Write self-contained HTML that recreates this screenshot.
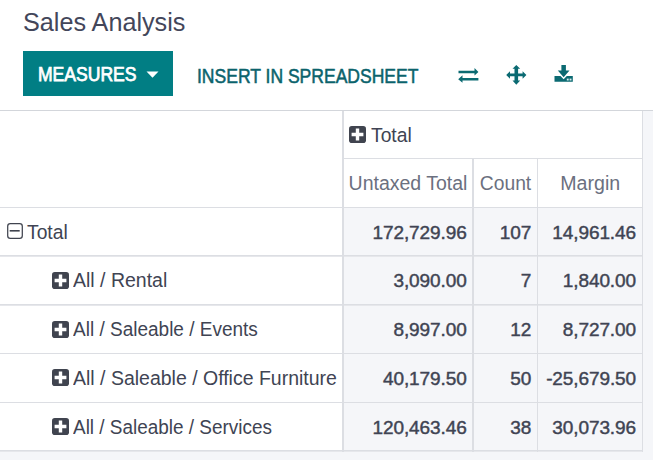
<!DOCTYPE html>
<html><head><meta charset="utf-8"><style>
html,body{margin:0;padding:0;width:653px;height:460px;overflow:hidden;background:#fff;font-family:"Liberation Sans",sans-serif;}
</style></head><body>
<div style="position:absolute;left:0px;top:111px;width:653px;height:349px;background:#f5f6f9"></div>
<div style="position:absolute;left:0px;top:111px;width:643px;height:340px;background:#f5f6f9"></div>
<div style="position:absolute;left:0px;top:111px;width:342px;height:340px;background:#ffffff"></div>
<div style="position:absolute;left:342px;top:111px;width:300px;height:96px;background:#ffffff"></div>
<div style="position:absolute;left:0px;top:110px;width:653px;height:1px;background:#d3d6db"></div>
<div style="position:absolute;left:0px;top:207px;width:643px;height:1px;background:#dcdee3"></div>
<div style="position:absolute;left:0px;top:255px;width:643px;height:1px;background:#dcdee3"></div>
<div style="position:absolute;left:0px;top:256px;width:643px;height:1px;background:#e6e7eb"></div>
<div style="position:absolute;left:0px;top:304px;width:643px;height:1px;background:#dcdee3"></div>
<div style="position:absolute;left:0px;top:305px;width:643px;height:1px;background:#e6e7eb"></div>
<div style="position:absolute;left:0px;top:353px;width:643px;height:1px;background:#dcdee3"></div>
<div style="position:absolute;left:0px;top:402px;width:643px;height:1px;background:#dcdee3"></div>
<div style="position:absolute;left:0px;top:450px;width:643px;height:1px;background:#dcdee3"></div>
<div style="position:absolute;left:0px;top:451px;width:643px;height:1px;background:#e6e7eb"></div>
<div style="position:absolute;left:342px;top:158px;width:301px;height:1px;background:#dcdee3"></div>
<div style="position:absolute;left:342px;top:111px;width:2px;height:341px;background:#dcdee3"></div>
<div style="position:absolute;left:472px;top:158px;width:2px;height:294px;background:#dcdee3"></div>
<div style="position:absolute;left:537px;top:158px;width:1px;height:294px;background:#dcdee3"></div>
<div style="position:absolute;left:642px;top:111px;width:1px;height:341px;background:#dcdee3"></div>
<div style="position:absolute;top:7.17px;font-size:25.2px;line-height:30px;color:#43465a;font-weight:normal;white-space:nowrap;left:23px;">Sales Analysis</div>
<div style="position:absolute;left:23px;top:51px;width:150px;height:45px;background:#017e84"></div>
<div style="position:absolute;top:62.64px;font-size:19.5px;line-height:23px;color:#ffffff;font-weight:normal;white-space:nowrap;-webkit-text-stroke:0.75px #fff;left:38px;"><span style="display:inline-block;transform:scaleX(0.9);transform-origin:left">MEASURES</span></div>
<svg style="position:absolute;left:146px;top:71px" width="13" height="7" viewBox="0 0 13 7"><path d="M0.5 0.5 L12.5 0.5 L6.5 6.8 Z" fill="#fff"/></svg>
<div style="position:absolute;top:64.64px;font-size:19.5px;line-height:23px;color:#0b636c;font-weight:normal;white-space:nowrap;-webkit-text-stroke:0.5px #0b636c;left:196.8px;"><span style="display:inline-block;transform:scaleX(0.899);transform-origin:left">INSERT IN SPREADSHEET</span></div>
<svg style="position:absolute;left:456px;top:66px" width="24" height="19" viewBox="0 0 24 19">
<path d="M2.5 4.8 H18.5 V2.1 L22.4 6 L18.5 9.6 V7.2 H2.5 Z" fill="#0b6a72"/>
<path d="M22.4 11.9 H6.5 V9.3 L2.2 13.2 L6.5 16.8 V14.5 H22.4 Z" fill="#0b6a72"/>
</svg>
<svg style="position:absolute;left:505px;top:64px" width="23" height="22" viewBox="0 0 23 22">
<path d="M11.3 0.9 L15.2 4.8 H13.1 V9.4 H17.6 V7.2 L21.4 10.9 L17.6 14.7 V12.2 H13.1 V16.6 H15.2 L11.3 20.8 L7.5 16.6 H9.5 V12.2 H5 V14.7 L1.2 10.9 L5 7.2 V9.4 H9.5 V4.8 H7.5 Z" fill="#0b6a72"/>
</svg>
<svg style="position:absolute;left:553px;top:63px" width="22" height="21" viewBox="0 0 22 21">
<path d="M8.4 1.9 H12.9 V7.5 H16.5 L10.65 14.3 L4.8 7.5 H8.4 Z" fill="#0b6a72"/>
<path d="M1.5 13 H7.5 L10.65 16.2 L13.8 13 H19.8 V18.8 H1.5 Z" fill="#0b6a72"/>
<rect x="13.8" y="15.6" width="1.9" height="1.9" fill="#d8ecec"/>
<rect x="16.6" y="15.6" width="1.9" height="1.9" fill="#d8ecec"/>
</svg>
<svg style="position:absolute;left:349.1px;top:125.9px" width="17" height="17" viewBox="0 0 17 17"><rect x="0" y="0" width="17" height="17" rx="2.8" fill="#40444f"/><path d="M6.8 2.6 H10.2 V6.8 H14.4 V10.2 H10.2 V14.4 H6.8 V10.2 H2.6 V6.8 H6.8 Z" fill="#fff"/></svg>
<div style="position:absolute;top:124.11px;font-size:19.3px;line-height:23px;color:#404453;font-weight:normal;white-space:nowrap;left:371px;">Total</div>
<div style="position:absolute;top:171.64px;font-size:19.5px;line-height:23px;color:#6b7080;font-weight:normal;white-space:nowrap;left:308px;width:200px;text-align:center;">Untaxed Total</div>
<div style="position:absolute;top:171.71px;font-size:19.3px;line-height:23px;color:#6b7080;font-weight:normal;white-space:nowrap;left:405.5px;width:200px;text-align:center;">Count</div>
<div style="position:absolute;top:171.11px;font-size:19.6px;line-height:24px;color:#6b7080;font-weight:normal;white-space:nowrap;left:490.20000000000005px;width:200px;text-align:center;">Margin</div>
<svg style="position:absolute;left:6.6px;top:223.2px" width="16" height="16" viewBox="0 0 16 16"><rect x="0.7" y="0.7" width="14.6" height="14.6" rx="2.6" fill="none" stroke="#40444f" stroke-width="1.25"/><rect x="2.7" y="7" width="10" height="1.6" fill="#40444f"/></svg>
<div style="position:absolute;top:220.51px;font-size:19.3px;line-height:23px;color:#404453;font-weight:normal;white-space:nowrap;left:27px;">Total</div>
<div style="position:absolute;top:220.62px;font-size:19px;line-height:23px;color:#404453;font-weight:normal;white-space:nowrap;letter-spacing:-0.1px;-webkit-text-stroke:0.45px #404453;right:186.39999999999998px;">172,729.96</div>
<div style="position:absolute;top:220.62px;font-size:19px;line-height:23px;color:#404453;font-weight:normal;white-space:nowrap;letter-spacing:-0.1px;-webkit-text-stroke:0.45px #404453;right:121.79999999999995px;">107</div>
<div style="position:absolute;top:220.62px;font-size:19px;line-height:23px;color:#404453;font-weight:normal;white-space:nowrap;letter-spacing:-0.1px;-webkit-text-stroke:0.45px #404453;right:17px;">14,961.46</div>
<svg style="position:absolute;left:51.8px;top:271.86999999999995px" width="17" height="17" viewBox="0 0 17 17"><rect x="0" y="0" width="17" height="17" rx="2.8" fill="#40444f"/><path d="M6.8 2.6 H10.2 V6.8 H14.4 V10.2 H10.2 V14.4 H6.8 V10.2 H2.6 V6.8 H6.8 Z" fill="#fff"/></svg>
<div style="position:absolute;top:269.25px;font-size:19.4px;line-height:23px;color:#404453;font-weight:normal;white-space:nowrap;left:72.5px;"><span style="display:inline-block;transform:scaleX(1.005);transform-origin:left">All / Rental</span></div>
<div style="position:absolute;top:269.39px;font-size:19px;line-height:23px;color:#404453;font-weight:normal;white-space:nowrap;letter-spacing:-0.1px;-webkit-text-stroke:0.45px #404453;right:186.39999999999998px;">3,090.00</div>
<div style="position:absolute;top:269.39px;font-size:19px;line-height:23px;color:#404453;font-weight:normal;white-space:nowrap;letter-spacing:-0.1px;-webkit-text-stroke:0.45px #404453;right:121.79999999999995px;">7</div>
<div style="position:absolute;top:269.39px;font-size:19px;line-height:23px;color:#404453;font-weight:normal;white-space:nowrap;letter-spacing:-0.1px;-webkit-text-stroke:0.45px #404453;right:17px;">1,840.00</div>
<svg style="position:absolute;left:51.8px;top:320.64px" width="17" height="17" viewBox="0 0 17 17"><rect x="0" y="0" width="17" height="17" rx="2.8" fill="#40444f"/><path d="M6.8 2.6 H10.2 V6.8 H14.4 V10.2 H10.2 V14.4 H6.8 V10.2 H2.6 V6.8 H6.8 Z" fill="#fff"/></svg>
<div style="position:absolute;top:318.02px;font-size:19.4px;line-height:23px;color:#404453;font-weight:normal;white-space:nowrap;left:72.5px;"><span style="display:inline-block;transform:scaleX(0.98);transform-origin:left">All / Saleable / Events</span></div>
<div style="position:absolute;top:318.16px;font-size:19px;line-height:23px;color:#404453;font-weight:normal;white-space:nowrap;letter-spacing:-0.1px;-webkit-text-stroke:0.45px #404453;right:186.39999999999998px;">8,997.00</div>
<div style="position:absolute;top:318.16px;font-size:19px;line-height:23px;color:#404453;font-weight:normal;white-space:nowrap;letter-spacing:-0.1px;-webkit-text-stroke:0.45px #404453;right:121.79999999999995px;">12</div>
<div style="position:absolute;top:318.16px;font-size:19px;line-height:23px;color:#404453;font-weight:normal;white-space:nowrap;letter-spacing:-0.1px;-webkit-text-stroke:0.45px #404453;right:17px;">8,727.00</div>
<svg style="position:absolute;left:51.8px;top:369.40999999999997px" width="17" height="17" viewBox="0 0 17 17"><rect x="0" y="0" width="17" height="17" rx="2.8" fill="#40444f"/><path d="M6.8 2.6 H10.2 V6.8 H14.4 V10.2 H10.2 V14.4 H6.8 V10.2 H2.6 V6.8 H6.8 Z" fill="#fff"/></svg>
<div style="position:absolute;top:366.79px;font-size:19.4px;line-height:23px;color:#404453;font-weight:normal;white-space:nowrap;left:72.5px;"><span style="display:inline-block;transform:scaleX(1.005);transform-origin:left">All / Saleable / Office Furniture</span></div>
<div style="position:absolute;top:366.93px;font-size:19px;line-height:23px;color:#404453;font-weight:normal;white-space:nowrap;letter-spacing:-0.1px;-webkit-text-stroke:0.45px #404453;right:186.39999999999998px;">40,179.50</div>
<div style="position:absolute;top:366.93px;font-size:19px;line-height:23px;color:#404453;font-weight:normal;white-space:nowrap;letter-spacing:-0.1px;-webkit-text-stroke:0.45px #404453;right:121.79999999999995px;">50</div>
<div style="position:absolute;top:366.93px;font-size:19px;line-height:23px;color:#404453;font-weight:normal;white-space:nowrap;letter-spacing:-0.1px;-webkit-text-stroke:0.45px #404453;right:17px;">-25,679.50</div>
<svg style="position:absolute;left:51.8px;top:418.17999999999995px" width="17" height="17" viewBox="0 0 17 17"><rect x="0" y="0" width="17" height="17" rx="2.8" fill="#40444f"/><path d="M6.8 2.6 H10.2 V6.8 H14.4 V10.2 H10.2 V14.4 H6.8 V10.2 H2.6 V6.8 H6.8 Z" fill="#fff"/></svg>
<div style="position:absolute;top:415.56px;font-size:19.4px;line-height:23px;color:#404453;font-weight:normal;white-space:nowrap;left:72.5px;"><span style="display:inline-block;transform:scaleX(0.977);transform-origin:left">All / Saleable / Services</span></div>
<div style="position:absolute;top:415.70px;font-size:19px;line-height:23px;color:#404453;font-weight:normal;white-space:nowrap;letter-spacing:-0.1px;-webkit-text-stroke:0.45px #404453;right:186.39999999999998px;">120,463.46</div>
<div style="position:absolute;top:415.70px;font-size:19px;line-height:23px;color:#404453;font-weight:normal;white-space:nowrap;letter-spacing:-0.1px;-webkit-text-stroke:0.45px #404453;right:121.79999999999995px;">38</div>
<div style="position:absolute;top:415.70px;font-size:19px;line-height:23px;color:#404453;font-weight:normal;white-space:nowrap;letter-spacing:-0.1px;-webkit-text-stroke:0.45px #404453;right:17px;">30,073.96</div>
</body></html>
